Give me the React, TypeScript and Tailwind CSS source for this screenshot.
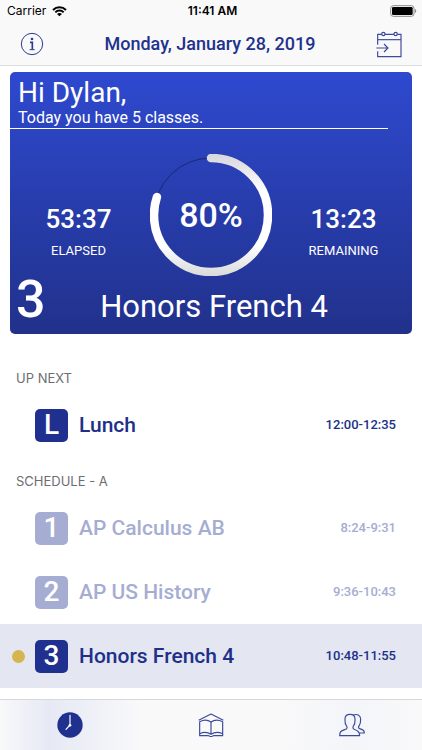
import React from 'react';

interface ClassRow {
  block: string;
  name: string;
  time: string;
  past?: boolean;
  current?: boolean;
}

const upNext: ClassRow[] = [{ block: 'L', name: 'Lunch', time: '12:00-12:35' }];

const schedule: ClassRow[] = [
  { block: '1', name: 'AP Calculus AB', time: '8:24-9:31', past: true },
  { block: '2', name: 'AP US History', time: '9:36-10:43', past: true },
  { block: '3', name: 'Honors French 4', time: '10:48-11:55', current: true },
];

function StatusBar() {
  return (
    <div className="grid grid-cols-3 items-center h-[22px] pl-[7px] pr-1 font-[Inter,sans-serif] text-xs text-black">
      <div className="flex items-center gap-[6px]">
        <span>Carrier</span>
        <svg width="15" height="11" viewBox="0 0 45 33" fill="none" stroke="#000" strokeWidth="6">
          <path d="M3 12 C14 1 31 1 42 12" />
          <path d="M10 19 C17 12 28 12 35 19" />
          <path d="M22 31 L15 24 C19 20 26 20 30 24 Z" fill="#000" stroke="none" />
        </svg>
      </div>
      <span className="text-center font-semibold">11:41 AM</span>
      <svg className="justify-self-end" width="28" height="12" viewBox="0 0 84 36">
        <rect x="2" y="2" width="70" height="32" rx="8" fill="none" stroke="#8a8a8a" strokeWidth="3" />
        <rect x="6" y="6" width="62" height="24" rx="4" fill="#000" />
        <path d="M75 12 C80 14 80 22 75 24 Z" fill="#8a8a8a" />
      </svg>
    </div>
  );
}

function NavBar() {
  return (
    <div className="flex items-center justify-between h-[43px] px-5">
      <button type="button" aria-label="Info">
        <svg width="24" height="24" viewBox="0 0 72 72" fill="none" stroke="#2c3a8e">
          <circle cx="36" cy="36" r="32" strokeWidth="3" />
          <circle cx="36" cy="21" r="4" fill="#2c3a8e" stroke="none" />
          <path d="M30 31 H37 V52" strokeWidth="5" />
          <path d="M29 53 H44" strokeWidth="3" />
        </svg>
      </button>
      <h1 className="text-lg font-medium text-[#22328d]">Monday, January 28, 2019</h1>
      <button type="button" aria-label="Go to date">
        <svg width="26" height="28" viewBox="0 0 78 84" fill="none" stroke="#3c4a9c" strokeWidth="3.5">
          <path d="M5 44 V13 H17 M27 13 H54 M64 13 H75 V80 H5 V64" />
          <path d="M5 29 H75" />
          <circle cx="22" cy="12" r="5" />
          <circle cx="59" cy="12" r="5" />
          <path d="M1 54 H35 M24 42 L36 54 L24 66" />
        </svg>
      </button>
    </div>
  );
}

function ProgressRing({ percent }: { percent: number }) {
  const length = 2 * Math.PI * 57;

  return (
    <div className="grid place-items-center w-32 h-[122px]">
      <svg className="col-start-1 row-start-1" width="122" height="122" viewBox="0 0 122 122" fill="none">
        <defs>
          {/* runs along x because the arc itself is turned by -90deg */}
          <linearGradient id="ring" gradientUnits="userSpaceOnUse" x1="122" y1="61" x2="0" y2="61">
            <stop offset="0" stopColor="#d6d6dc" />
            <stop offset="0.3" stopColor="#ffffff" />
            <stop offset="0.75" stopColor="#ffffff" />
            <stop offset="1" stopColor="#dadada" />
          </linearGradient>
        </defs>
        <circle cx="61" cy="61" r="57" stroke="#1a2672" strokeWidth="1" />
        <circle
          cx="61"
          cy="61"
          r="57"
          stroke="url(#ring)"
          strokeWidth="8.5"
          strokeLinecap="round"
          strokeDasharray={`${(length * percent) / 100} ${length}`}
          transform="rotate(-90 61 61)"
        />
      </svg>
      <span className="col-start-1 row-start-1 text-[34px] leading-10 font-medium">{percent}%</span>
    </div>
  );
}

function Timer({ value, label }: { value: string; label: string }) {
  return (
    <div className="flex-1 pt-9 text-center">
      <div className="text-[26px] leading-8 font-medium">{value}</div>
      <div className="mt-1 text-[13px] leading-6">{label}</div>
    </div>
  );
}

function CurrentClassCard() {
  return (
    <section className="mx-[10px] mt-[6px] h-[262px] rounded-[5px] bg-linear-to-b/srgb from-[#2e49cf] to-[#21318b] text-white">
      <div className="mr-6 h-[57px] pl-2 pt-[5px] border-b border-white">
        <h2 className="text-[28px] leading-8">Hi Dylan,</h2>
        <p className="text-base leading-[18px]">Today you have 5 classes.</p>
      </div>
      <div className="flex items-center h-[122px] mt-[25px]">
        <Timer value="53:37" label="ELAPSED" />
        <ProgressRing percent={80} />
        <Timer value="13:23" label="REMAINING" />
      </div>
      <div className="flex items-baseline">
        <span className="flex-1 pl-[6px] text-[52px] leading-[48px] font-medium">3</span>
        <span className="text-[31px] leading-[48px]">Honors French 4</span>
        <span className="flex-1" />
      </div>
    </section>
  );
}

function ClassList({ title, rows }: { title: string; rows: ClassRow[] }) {
  return (
    <section>
      <h3 className="h-[39px] pl-4 pt-4 font-[Inter,sans-serif] text-[13px] leading-4 text-[#6d6d72]">{title}</h3>
      <ul>
        {rows.map((row) => (
          <li
            key={row.block}
            className={`flex items-center h-16 pl-3 pr-[26px] font-medium ${
              row.current ? 'bg-[#e4e6f1]' : ''
            } ${row.past ? 'text-[#a6add3]' : 'text-[#20308a]'}`}
          >
            <span className={`size-[13px] rounded-full ${row.current ? 'bg-[#d4b54e]' : ''}`} />
            <span
              className={`ml-[10px] flex items-center justify-center size-[33px] rounded-[5px] text-[28px] leading-8 text-white ${
                row.past ? 'bg-[#a6add3]' : 'bg-[#20308f]'
              }`}
            >
              {row.block}
            </span>
            <span className="ml-[11px] flex-1 pt-[2px] text-[21px]">{row.name}</span>
            <span className="text-[13px]">{row.time}</span>
          </li>
        ))}
      </ul>
    </section>
  );
}

function TabBar() {
  return (
    <nav className="mt-auto grid grid-cols-3 h-[51px] border-t border-[#d8d8db] bg-[#f9f9fa]">
      <button
        type="button"
        aria-label="Today"
        className="flex items-center justify-center bg-linear-to-r from-[#f9f9fa] via-[#e6e9f5] via-35% to-[#f9f9fa]"
      >
        <svg width="26" height="26" viewBox="0 0 78 78" fill="none" stroke="#fff" strokeLinecap="round">
          <circle cx="39" cy="39" r="38" fill="#20308f" stroke="none" />
          <path d="M39 10 V39 L27 52" strokeWidth="3.5" />
          <circle cx="39" cy="40" r="4" fill="#fff" stroke="none" />
        </svg>
      </button>
      <button type="button" aria-label="Classes" className="flex items-center justify-center">
        <svg width="26" height="24" viewBox="0 0 78 72" fill="none" stroke="#3c4a9c" strokeWidth="3.5" strokeLinejoin="round">
          <path d="M2 22 L39 3 L76 22" />
          <path d="M39 27 C29 20 15 21 5 26 V68 H31 C34 68 35 71 39 71 C43 71 44 68 47 68 H74 V26 C63 21 49 20 39 27 Z" />
          <path d="M39 27 V64 M5 62 C16 57 29 57 39 64 C49 57 63 57 74 62" />
        </svg>
      </button>
      <button
        type="button"
        aria-label="Friends"
        className="flex items-center justify-center bg-linear-to-r from-[#f9f9fa] via-[#f4f5f9] to-[#f9f9fa]"
      >
        <svg width="26" height="24" viewBox="0 0 78 72" fill="none" stroke="#3c4a9c" strokeWidth="3.5" strokeLinejoin="round">
          <path d="M2 68 C2 53 9 53 22 48 C25 46 25 42 22 38 C17 32 18 25 18 18 C18 7 24 4 33 4 C43 4 48 8 48 18 C48 25 49 32 44 38 C41 42 41 46 44 48 C56 53 62 56 62 68 Z" />
          <path d="M42 7 C54 1 65 7 65 19 C65 27 65 32 61 37 C57 42 58 45 62 47 C71 50 76 51 76 60 H61" />
        </svg>
      </button>
    </nav>
  );
}

export default function App() {
  return (
    <div className="flex flex-col min-h-screen bg-white font-[Roboto,sans-serif]">
      <header className="border-b border-[#dcdcde] bg-[#f9f9fa]">
        <StatusBar />
        <NavBar />
      </header>
      <main>
        <CurrentClassCard />
        <div className="mt-5">
          <ClassList title="UP NEXT" rows={upNext} />
          <ClassList title="SCHEDULE - A" rows={schedule} />
        </div>
      </main>
      <TabBar />
    </div>
  );
}
